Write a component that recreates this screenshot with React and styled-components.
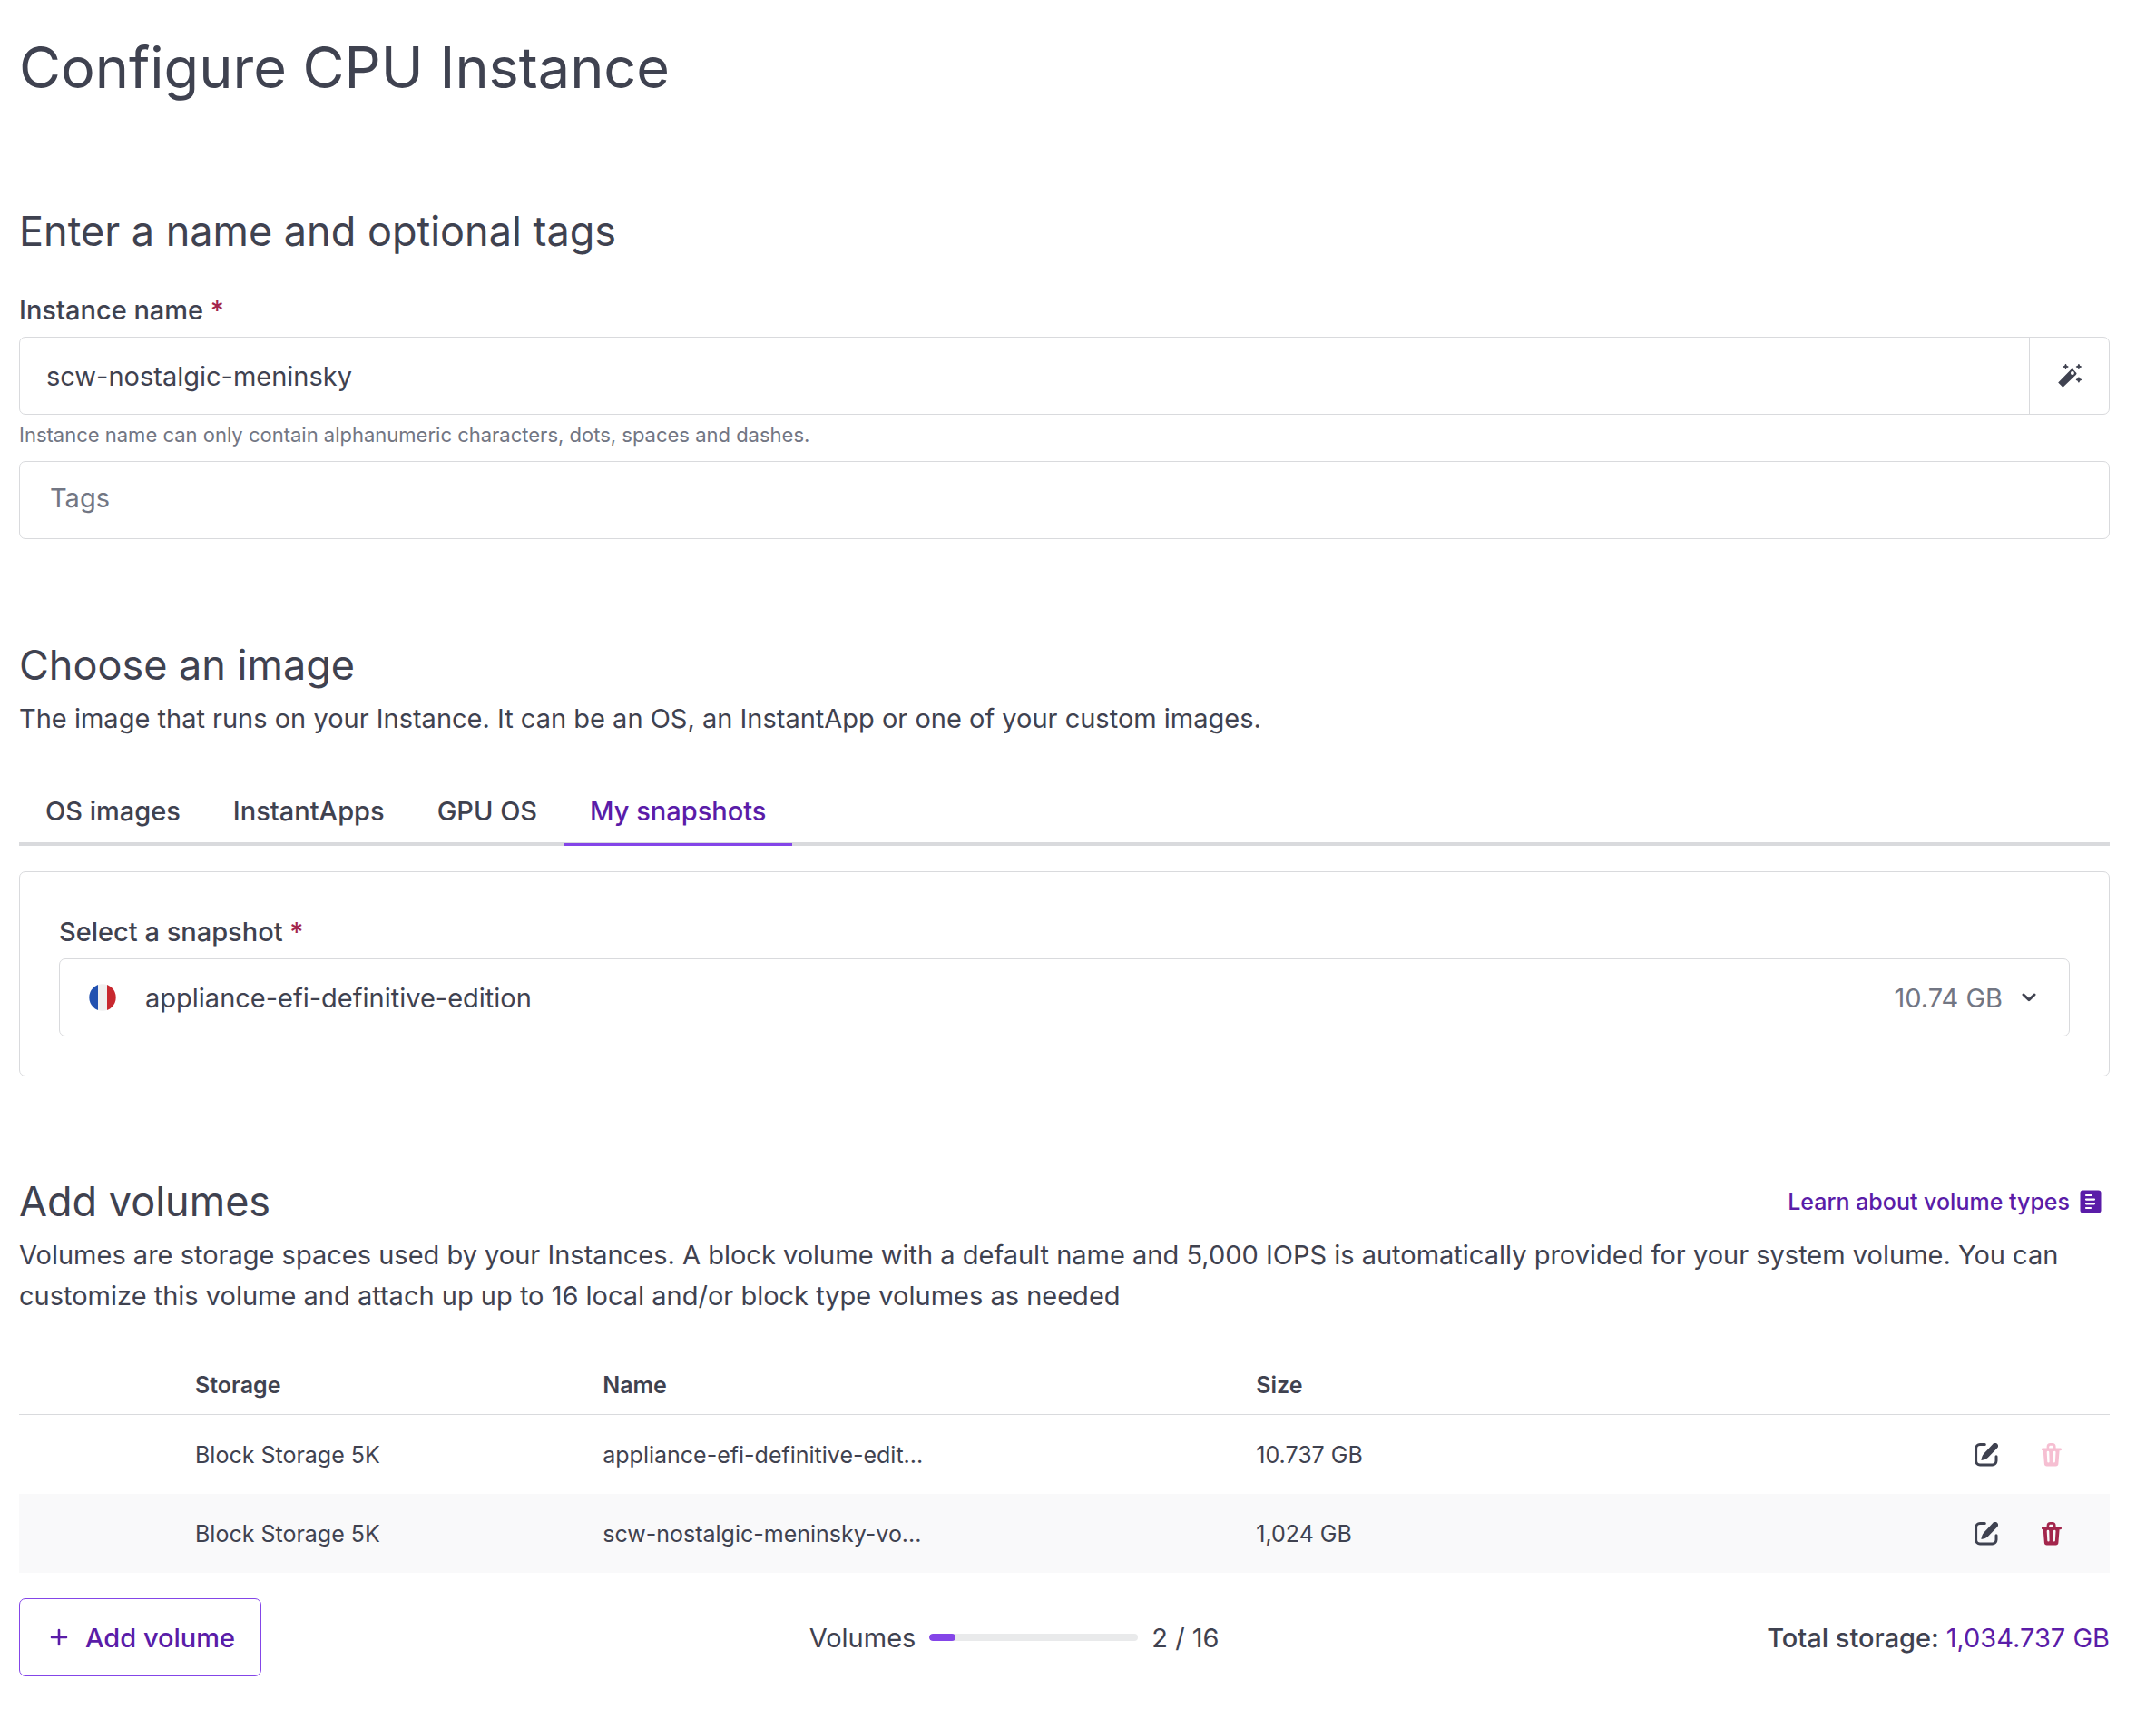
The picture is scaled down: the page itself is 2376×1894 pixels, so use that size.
import React, { useState } from 'react';
import styled, { createGlobalStyle } from 'styled-components';

const colors = {
  text: '#3f4250',
  weak: '#727683',
  border: '#d9dadd',
  primary: '#5a1ca8',
  primaryStrong: '#8445e8',
  danger: '#a3264c',
};

const GlobalStyle = createGlobalStyle`
  *, *::before, *::after {
    box-sizing: border-box;
  }

  body {
    margin: 0;
    background: #ffffff;
    color: ${colors.text};
    font-family: Inter, 'Liberation Sans', sans-serif;
    font-size: 29px;
    line-height: 45px;
  }

  button, input, select {
    font: inherit;
    color: inherit;
    margin: 0;
  }
`;

const Page = styled.main`
  padding: 36px 51px 46px 21px;
`;

const Title = styled.h1`
  margin: 0 0 113px;
  font-size: 63px;
  font-weight: 400;
  line-height: 76px;
`;

const Section = styled.section`
  margin-bottom: ${(props) => props.$gap || '0'};
`;

const SectionHeader = styled.div`
  display: flex;
  justify-content: space-between;
  align-items: center;
`;

const Heading = styled.h2`
  margin: 0;
  font-size: 45px;
  font-weight: 400;
  line-height: 60px;
`;

const Text = styled.p`
  margin: 6px 0 0;
`;

const Label = styled.label`
  display: block;
  margin-bottom: 7px;
  font-weight: 500;
`;

const Required = styled.span`
  color: ${colors.danger};
`;

const Field = styled.div`
  display: flex;
  align-items: center;
  height: 86px;
  border: 1px solid ${colors.border};
  border-radius: 7px;
`;

const TextInput = styled.input`
  flex: 1;
  min-width: 0;
  height: 100%;
  padding: 0 29px;
  border: none;
  outline: none;
  background: transparent;
`;

const TagsInput = styled(TextInput)`
  padding: 0 33px 6px;

  &::placeholder {
    color: ${colors.weak};
    opacity: 1;
  }
`;

const RandomButton = styled.button`
  display: flex;
  align-items: center;
  justify-content: center;
  width: 88px;
  height: 100%;
  padding: 0;
  border: none;
  border-left: 1px solid ${colors.border};
  background: transparent;
  cursor: pointer;
`;

const Helper = styled.p`
  margin: 4px 0 11px;
  color: ${colors.weak};
  font-size: 22px;
  line-height: 36px;
`;

const NameSection = styled(Section)`
  ${Heading} {
    margin-bottom: 34px;
  }
`;

const Tabs = styled.div`
  display: flex;
  margin: 43px 0 28px;
  border-bottom: 4px solid ${colors.border};
`;

const Tab = styled.button`
  height: 75px;
  margin-bottom: -4px;
  padding: 0 29px;
  border: none;
  border-bottom: 3px solid ${(props) => (props.$active ? colors.primaryStrong : 'transparent')};
  background: transparent;
  color: ${(props) => (props.$active ? colors.primary : colors.text)};
  font-weight: 500;
  cursor: pointer;
`;

const Card = styled.div`
  padding: 43px;
  border: 1px solid ${colors.border};
  border-radius: 7px;
`;

const SelectField = styled(Field)`
  padding: 0 36px 0 32px;
`;

const Select = styled.select`
  flex: 1;
  height: 100%;
  padding: 0 32px;
  border: none;
  outline: none;
  background: transparent;
  appearance: none;
`;

const SnapshotSize = styled.span`
  margin-right: 21px;
  color: ${colors.weak};
`;

const DocLink = styled.a`
  display: flex;
  align-items: center;
  gap: 11px;
  margin-right: 9px;
  color: ${colors.primary};
  font-size: 25px;
  font-weight: 500;
  line-height: 36px;
  text-decoration: none;
`;

const VolumeTable = styled.table`
  width: 100%;
  margin: 44px 0 28px;
  border-collapse: separate;
  border-spacing: 0;
  table-layout: fixed;
  font-size: 25px;
  line-height: 36px;
`;

const HeadCell = styled.th`
  width: ${(props) => props.$width || 'auto'};
  height: 65px;
  padding: 0;
  border-bottom: 1px solid ${colors.border};
  font-weight: 600;
  text-align: left;
`;

const Row = styled.tr`
  background: ${(props) => (props.$striped ? '#f9f9fa' : 'transparent')};
`;

const Cell = styled.td`
  height: 87px;
  padding: 0;
`;

const Actions = styled.div`
  display: flex;
  justify-content: flex-end;
  gap: 22px;
  padding-right: 39px;
`;

const IconButton = styled.button`
  display: flex;
  align-items: center;
  justify-content: center;
  width: 50px;
  height: 50px;
  padding: 0;
  border: none;
  background: transparent;
  color: ${(props) => (props.$danger ? colors.danger : colors.text)};
  cursor: pointer;

  &:disabled {
    color: #f6bfd2;
    cursor: not-allowed;
  }
`;

const Footer = styled.div`
  display: flex;
  justify-content: space-between;
  align-items: center;
`;

const AddButton = styled.button`
  display: flex;
  align-items: center;
  gap: 19px;
  height: 86px;
  padding: 0 28px 0 33px;
  border: 1px solid ${colors.primaryStrong};
  border-radius: 7px;
  background: transparent;
  color: ${colors.primary};
  font-weight: 500;
  cursor: pointer;
`;

const Quota = styled.div`
  display: flex;
  align-items: center;
  gap: 15px;
`;

const QuotaBar = styled.progress`
  width: 230px;
  height: 8px;
  border: none;
  border-radius: 4px;
  appearance: none;
  overflow: hidden;

  &::-webkit-progress-bar {
    background: #e9eaeb;
  }

  &::-webkit-progress-value {
    border-radius: 4px;
    background: ${colors.primaryStrong};
  }
`;

const Total = styled.div`
  font-weight: 500;
`;

const TotalValue = styled.span`
  color: ${colors.primary};
  font-weight: 400;
`;

const WandIcon = () => (
  <svg width="26" height="26" viewBox="0 0 26 26" fill="currentColor" aria-hidden="true">
    <path
      fillRule="evenodd"
      d="M14.4 6.1a1.6 1.6 0 0 1 2.2 0l3.4 3.4a1.6 1.6 0 0 1 0 2.2L5.4 25.8.2 20.4zM15.9 7.9a2 2 0 1 0 0 4 2 2 0 0 0 0-4z"
    />
    <path
      d="M8.5.5l.8 1.7 1.7.8-1.7.8-.8 1.7-.8-1.7L6 3l1.7-.8zM22.9.5l.8 1.7 1.7.8-1.7.8-.8 1.7-.8-1.7-1.7-.8 1.7-.8zM22.9 14.9l.8 1.7 1.7.8-1.7.8-.8 1.7-.8-1.7-1.7-.8 1.7-.8z"
      stroke="currentColor"
      strokeWidth="1.2"
      strokeLinejoin="round"
    />
  </svg>
);

const FlagIcon = () => (
  <svg width="30" height="30" viewBox="0 0 30 30" aria-hidden="true">
    <clipPath id="flag">
      <circle cx="15" cy="15" r="14.7" />
    </clipPath>
    <g clipPath="url(#flag)">
      <path fill="#2150b0" d="M0 0h10v30H0z" />
      <path fill="#f0f0f0" d="M10 0h10v30H10z" />
      <path fill="#c8282f" d="M20 0h10v30H20z" />
    </g>
  </svg>
);

const ChevronIcon = () => (
  <svg width="16" height="10" viewBox="0 0 16 10" fill="none" aria-hidden="true">
    <path d="M2 2l6 5.6L14 2" stroke="currentColor" strokeWidth="3" strokeLinecap="round" strokeLinejoin="round" />
  </svg>
);

const DocIcon = () => (
  <svg width="24" height="26" viewBox="0 0 24 26" fill="none" aria-hidden="true">
    <rect x="0.5" y="0.5" width="23" height="25" rx="3" fill="currentColor" />
    <path d="M7 6h6M7 10.6h9M7 15.3h9M7 20h5" stroke="#ffffff" strokeWidth="2.2" strokeLinecap="round" />
  </svg>
);

const EditIcon = () => (
  <svg width="26" height="26" viewBox="0 0 26 26" aria-hidden="true">
    <path
      d="M11.3 1.6H6A4.4 4.4 0 0 0 1.6 6v13.6A4.4 4.4 0 0 0 6 24h13.6a4.4 4.4 0 0 0 4.4-4.4v-4.9"
      fill="none"
      stroke="currentColor"
      strokeWidth="3"
      strokeLinecap="round"
    />
    <path
      d="M20.3.9a3.2 3.2 0 0 1 4.7 4.6L14.8 16c-1.7 1.6-3.9 2.5-7.4 3.1.4-3.3 1.3-5.7 3-7.5z"
      fill="currentColor"
    />
  </svg>
);

const TrashIcon = () => (
  <svg width="22" height="26" viewBox="0 0 22 26" aria-hidden="true">
    <path
      fill="currentColor"
      fillRule="evenodd"
      d="M5.6 5.5V4A4 4 0 0 1 9.6 0h2a4 4 0 0 1 4 4v1.5h5.1a1.2 1.2 0 0 1 0 2.7h-1.1l-1.2 14.6a2.8 2.8 0 0 1-2.8 2.6H5.7a2.8 2.8 0 0 1-2.8-2.6L1.7 8.2H1.2a1.2 1.2 0 0 1 0-2.7zM8.2 5.5h4.8V4.2c0-.9-.6-1.5-1.5-1.5H9.7c-.9 0-1.5.6-1.5 1.5zM5.7 10.2l.6 10.3a1 1 0 0 0 2.3-.1L8.3 10.1a1.3 1.3 0 0 0-2.6.1zM12.9 10.1l-.3 10.3a1 1 0 0 0 2.3.1l.6-10.3a1.3 1.3 0 0 0-2.6-.1z"
    />
  </svg>
);

const PlusIcon = () => (
  <svg width="20" height="20" viewBox="0 0 20 20" aria-hidden="true">
    <path d="M10 2v16M2 10h16" stroke="currentColor" strokeWidth="2.6" strokeLinecap="round" />
  </svg>
);

const tabs = ['OS images', 'InstantApps', 'GPU OS', 'My snapshots'];

const volumes = [
  { storage: 'Block Storage 5K', name: 'appliance-efi-definitive-edit...', size: '10.737 GB', locked: true },
  { storage: 'Block Storage 5K', name: 'scw-nostalgic-meninsky-vo...', size: '1,024 GB', locked: false },
];

const App = () => {
  const [name, setName] = useState('scw-nostalgic-meninsky');
  const [activeTab, setActiveTab] = useState('My snapshots');

  return (
    <>
      <GlobalStyle />
      <Page>
        <Title>Configure CPU Instance</Title>

        <NameSection $gap="109px">
          <Heading>Enter a name and optional tags</Heading>
          <Label htmlFor="instance-name">
            Instance name <Required>*</Required>
          </Label>
          <Field>
            <TextInput id="instance-name" value={name} onChange={(e) => setName(e.target.value)} />
            <RandomButton type="button" aria-label="Random name">
              <WandIcon />
            </RandomButton>
          </Field>
          <Helper>Instance name can only contain alphanumeric characters, dots, spaces and dashes.</Helper>
          <Field>
            <TagsInput aria-label="Tags" placeholder="Tags" />
          </Field>
        </NameSection>

        <Section $gap="108px">
          <Heading>Choose an image</Heading>
          <Text>The image that runs on your Instance. It can be an OS, an InstantApp or one of your custom images.</Text>
          <Tabs role="tablist">
            {tabs.map((tab) => (
              <Tab
                key={tab}
                type="button"
                role="tab"
                aria-selected={activeTab === tab}
                $active={activeTab === tab}
                onClick={() => setActiveTab(tab)}
              >
                {tab}
              </Tab>
            ))}
          </Tabs>
          <Card>
            <Label htmlFor="snapshot">
              Select a snapshot <Required>*</Required>
            </Label>
            <SelectField>
              <FlagIcon />
              <Select id="snapshot">
                <option>appliance-efi-definitive-edition</option>
              </Select>
              <SnapshotSize>10.74 GB</SnapshotSize>
              <ChevronIcon />
            </SelectField>
          </Card>
        </Section>

        <Section>
          <SectionHeader>
            <Heading>Add volumes</Heading>
            <DocLink href="#volume-types">
              Learn about volume types
              <DocIcon />
            </DocLink>
          </SectionHeader>
          <Text>
            Volumes are storage spaces used by your Instances. A block volume with a default name and 5,000 IOPS is
            automatically provided for your system volume. You can customize this volume and attach up up to 16 local
            and/or block type volumes as needed
          </Text>
          <VolumeTable>
            <thead>
              <tr>
                <HeadCell $width="194px" />
                <HeadCell $width="19.5%">Storage</HeadCell>
                <HeadCell $width="31.25%">Name</HeadCell>
                <HeadCell>Size</HeadCell>
                <HeadCell $width="200px" />
              </tr>
            </thead>
            <tbody>
              {volumes.map((volume, index) => (
                <Row key={volume.name} $striped={index % 2 === 1}>
                  <Cell />
                  <Cell>{volume.storage}</Cell>
                  <Cell>{volume.name}</Cell>
                  <Cell>{volume.size}</Cell>
                  <Cell>
                    <Actions>
                      <IconButton type="button" aria-label="Edit">
                        <EditIcon />
                      </IconButton>
                      <IconButton type="button" aria-label="Delete" $danger disabled={volume.locked}>
                        <TrashIcon />
                      </IconButton>
                    </Actions>
                  </Cell>
                </Row>
              ))}
            </tbody>
          </VolumeTable>
          <Footer>
            <AddButton type="button">
              <PlusIcon />
              Add volume
            </AddButton>
            <Quota>
              <label htmlFor="quota">Volumes</label>
              <QuotaBar id="quota" value={2} max={16} />
              <span>2 / 16</span>
            </Quota>
            <Total>
              Total storage: <TotalValue>1,034.737 GB</TotalValue>
            </Total>
          </Footer>
        </Section>
      </Page>
    </>
  );
};

export default App;
